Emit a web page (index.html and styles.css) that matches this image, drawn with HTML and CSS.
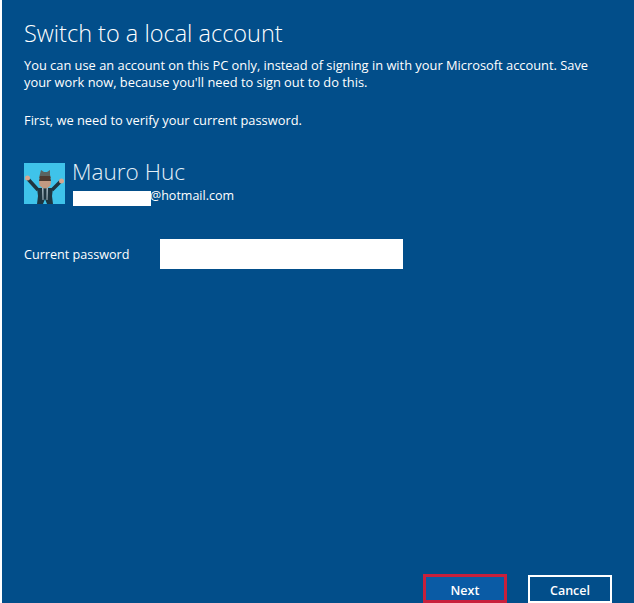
FILE: index.html
```html
<!DOCTYPE html>
<html lang="en">
<head>
<meta charset="utf-8">
<title>Switch to a local account</title>
<link rel="stylesheet" href="styles.css">
</head>
<body>
<main class="dialog">
  <div class="content">
    <h1 class="title">Switch to a local account</h1>
    <p class="text">You can use an account on this PC only, instead of signing in with your Microsoft account. Save<br>your work now, because you'll need to sign out to do this.</p>
    <p class="text verify">First, we need to verify your current password.</p>
    <div class="user">
      <svg class="avatar" viewBox="0 0 41 41" width="41" height="41" aria-hidden="true">
        <rect width="41" height="41" fill="#3fc3ea"/>
        <path d="M4 16 L14 27 M37 18 L28 27" stroke="#1f3540" stroke-width="3.500" fill="none"/>
        <path d="M13 25 L29 25 L28 33 L29 41 L23 41 L21 36 L19 41 L13 41 L14 33 Z" fill="#1f3540"/>
        <circle cx="3.500" cy="15" r="2.500" fill="#d8a68e"/>
        <circle cx="37.500" cy="18" r="2.500" fill="#d8a68e"/>
        <path d="M17 7 L20 9 L23 9 L26 7 L26 12 L27 15 L15 15 Z" fill="#5b6461"/>
        <ellipse cx="21" cy="19.500" rx="6" ry="6" fill="#c39a82"/>
        <path d="M15 18 L27 18 L26 13 L16 13 Z" fill="#4e3a30"/>
        <path d="M18 25 L19.500 25 L19.500 37 L18.500 37 Z M22.500 25 L24 25 L23.500 37 L22.500 37 Z" fill="#a9bcc6"/>
      </svg>
      <div class="identity">
        <div class="name">Mauro Huc</div>
        <div class="mail"><span class="redact"></span><span>@hotmail.com</span></div>
      </div>
    </div>
    <div class="field">
      <label class="label" for="pw">Current password</label>
      <input class="input" id="pw" type="password">
    </div>
  </div>
  <div class="actions">
    <button class="btn primary" type="button">Next</button>
    <button class="btn" type="button">Cancel</button>
  </div>
</main>
</body>
</html>
```
FILE: styles.css
```css
html, body {
  margin: 0;
  height: 100%;
  background: #fff;
}
.dialog {
  box-sizing: border-box;
  height: 603px;
  margin-left: 2px;
  background: #024e8a;
  color: #fff;
  font-family: "Open Sans", "Liberation Sans", sans-serif;
  display: flex;
  flex-direction: column;
  justify-content: space-between;
}
.content {
  padding: 17px 22px 0;
}
.title {
  margin: 0;
  font-size: 23.5px;
  font-weight: 300;
  line-height: 32px;
}
.text {
  margin: 8px 0 0;
  font-size: 12.85px;
  line-height: 17px;
}
.verify {
  margin-top: 21px;
}
.user {
  display: flex;
  gap: 7px;
  margin-top: 34px;
}
.avatar {
  display: block;
  flex: none;
}
.identity {
  margin-top: -5px;
}
.name {
  font-size: 22.6px;
  font-weight: 300;
  line-height: 28px;
  color: #e4f0f8;
}
.mail {
  display: flex;
  font-size: 12.5px;
  line-height: 16px;
  margin-top: 2px;
}
.redact {
  width: 78px;
  height: 15px;
  margin: 3px -1px 0 1px;
  background: #fff;
  position: relative;
}
.field {
  display: flex;
  align-items: center;
  margin-top: 33px;
}
.label {
  width: 136px;
  font-size: 12.6px;
}
.input {
  box-sizing: border-box;
  width: 243px;
  height: 30px;
  border: 0;
  padding: 0;
  background: #fff;
}
.actions {
  display: flex;
  justify-content: flex-end;
  align-items: flex-end;
  gap: 21px;
  padding-right: 22px;
}
.btn {
  box-sizing: border-box;
  width: 84px;
  height: 28px;
  border: 2px solid #fff;
  background: transparent;
  color: #fff;
  font: 600 12.5px "Open Sans", "Liberation Sans", sans-serif;
  padding: 3px 0 0;
}
.primary {
  height: 29px;
  background: #0a5ba5;
  border-color: #c8203c;
  border-width: 3px;
}
```
